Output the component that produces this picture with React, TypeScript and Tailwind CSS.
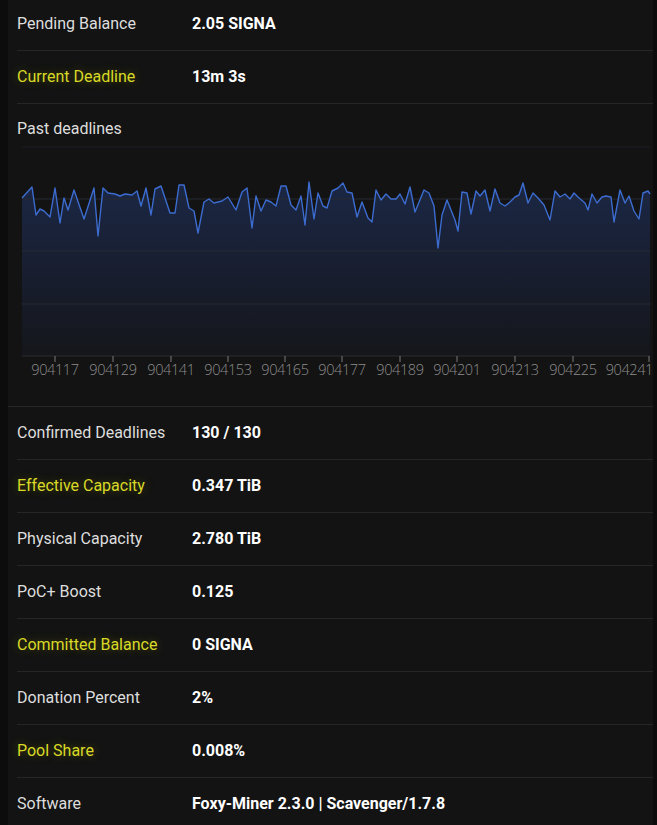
const pts: [number, number][] = [
  [22, 198], [32, 187], [36, 215], [40, 209], [44, 211], [50, 217], [55, 188], [60, 223], [64, 198], [68, 210],
  [74, 190], [84, 219], [94, 188], [98, 236], [103, 188], [108, 193], [115, 194], [120, 196], [125, 194], [132, 195],
  [137, 191], [141, 206], [146, 188], [151, 215], [155, 189], [161, 186], [170, 213], [175, 213], [179, 185], [184, 185],
  [189, 208], [194, 211], [198, 233], [204, 202], [209, 199], [214, 203], [222, 201], [228, 197], [236, 210], [242, 192],
  [247, 188], [252, 228], [256, 196], [261, 211], [266, 200], [271, 202], [276, 206], [281, 186], [286, 186], [291, 205],
  [296, 210], [301, 196], [305, 225], [309, 182], [314, 219], [318, 193], [323, 206], [327, 208], [332, 191], [338, 188],
  [343, 183], [347, 192], [352, 193], [357, 217], [362, 202], [368, 218], [372, 222], [376, 190], [381, 200], [386, 194],
  [391, 199], [396, 199], [400, 194], [405, 204], [410, 187], [415, 212], [424, 190], [429, 193], [434, 206], [438, 248],
  [442, 215], [447, 200], [455, 220], [458, 231], [462, 192], [467, 193], [471, 214], [476, 191], [480, 196], [485, 190],
  [490, 211], [495, 189], [500, 203], [505, 206], [510, 202], [515, 197], [519, 195], [523, 183], [528, 203], [533, 193],
  [538, 198], [544, 205], [550, 220], [555, 191], [560, 197], [565, 194], [570, 199], [574, 193], [579, 198], [585, 203],
  [588, 210], [592, 194], [597, 203], [602, 197], [606, 196], [611, 197], [614, 222], [620, 190], [625, 203], [629, 196],
  [634, 211], [639, 219], [643, 193], [648, 191], [650, 194],
]

const ticks: [number, string][] = [
  [55, "904117"], [113, "904129"], [171, "904141"], [228, "904153"], [285, "904165"], [342, "904177"],
  [400, "904189"], [457, "904201"], [515, "904213"], [573, "904225"], [649, "904241"],
]

function Row({ label, value, hi }: { label: string; value: string; hi?: boolean }) {
  return (
    <div className="flex h-[53px] items-center border-b border-[#262626]">
      <div
        className={
          hi
            ? "w-[175px] text-[#d9d926] [text-shadow:0_0_10px_rgba(190,190,0,0.35)]"
            : "w-[175px] text-[#dedede]"
        }
      >
        {label}
      </div>
      <div className="font-bold text-white">{value}</div>
    </div>
  )
}

function DeadlineChart() {
  const line = pts.map((p) => p.join(",")).join(" ")
  const area = `22,356 ${line} 650,356`
  return (
    <svg width="645" height="266" viewBox="8 140 645 266" className="block">
      <defs>
        <linearGradient id="fill" x1="0" y1="0" x2="0" y2="1">
          <stop offset="0%" stopColor="#1b2745" />
          <stop offset="100%" stopColor="#15161b" />
        </linearGradient>
      </defs>
      <polygon points={area} fill="url(#fill)" />
      <line x1="22" x2="650" y1="147" y2="147" stroke="#1d1f24" strokeWidth="1" />
      {[199, 251, 304].map((y) => (
        <line key={y} x1="22" x2="650" y1={y} y2={y} stroke="#262a33" strokeWidth="1" />
      ))}
      <line x1="22" x2="650" y1="356" y2="356" stroke="#2c2c30" strokeWidth="1" />
      <polyline points={line} fill="none" stroke="#3c6cd0" strokeWidth="1.4" strokeLinejoin="round" />
      {ticks.map(([x, t], i) => {
        const last = i === ticks.length - 1
        return (
          <g key={t}>
            <line x1={x} x2={x} y1="356" y2="362" stroke="#7a7a7a" strokeWidth="1" />
            <text
              x={last ? 653 : x}
              y="374.5"
              textAnchor={last ? "end" : "middle"}
              fill="#8c8c8c"
              fontSize="14.5"
              fontWeight="300"
              letterSpacing="-0.4"
              fontFamily="'Open Sans', sans-serif"
            >
              {t}
            </text>
          </g>
        )
      })}
    </svg>
  )
}

export default function App() {
  return (
    <div className="min-h-screen bg-[#0c0c0c] pl-[8px] overflow-hidden font-['Roboto',sans-serif] text-[16px]">
      <div className="w-[645px] bg-[#131313] pl-[9px] -mt-[2px] min-h-[830px]">
        <Row label="Pending Balance" value="2.05 SIGNA" />
        <Row label="Current Deadline" value="13m 3s" hi />
        <div className="h-[303px] border-b border-[#262626] -ml-[9px]">
          <div className="h-[36px] pt-[16px] pl-[9px] leading-[18px] text-[#dedede]">Past deadlines</div>
          <DeadlineChart />
        </div>
        <Row label="Confirmed Deadlines" value="130 / 130" />
        <Row label="Effective Capacity" value="0.347 TiB" hi />
        <Row label="Physical Capacity" value="2.780 TiB" />
        <Row label="PoC+ Boost" value="0.125" />
        <Row label="Committed Balance" value="0 SIGNA" hi />
        <Row label="Donation Percent" value="2%" />
        <Row label="Pool Share" value="0.008%" hi />
        <Row label="Software" value="Foxy-Miner 2.3.0 | Scavenger/1.7.8" />
      </div>
    </div>
  )
}
